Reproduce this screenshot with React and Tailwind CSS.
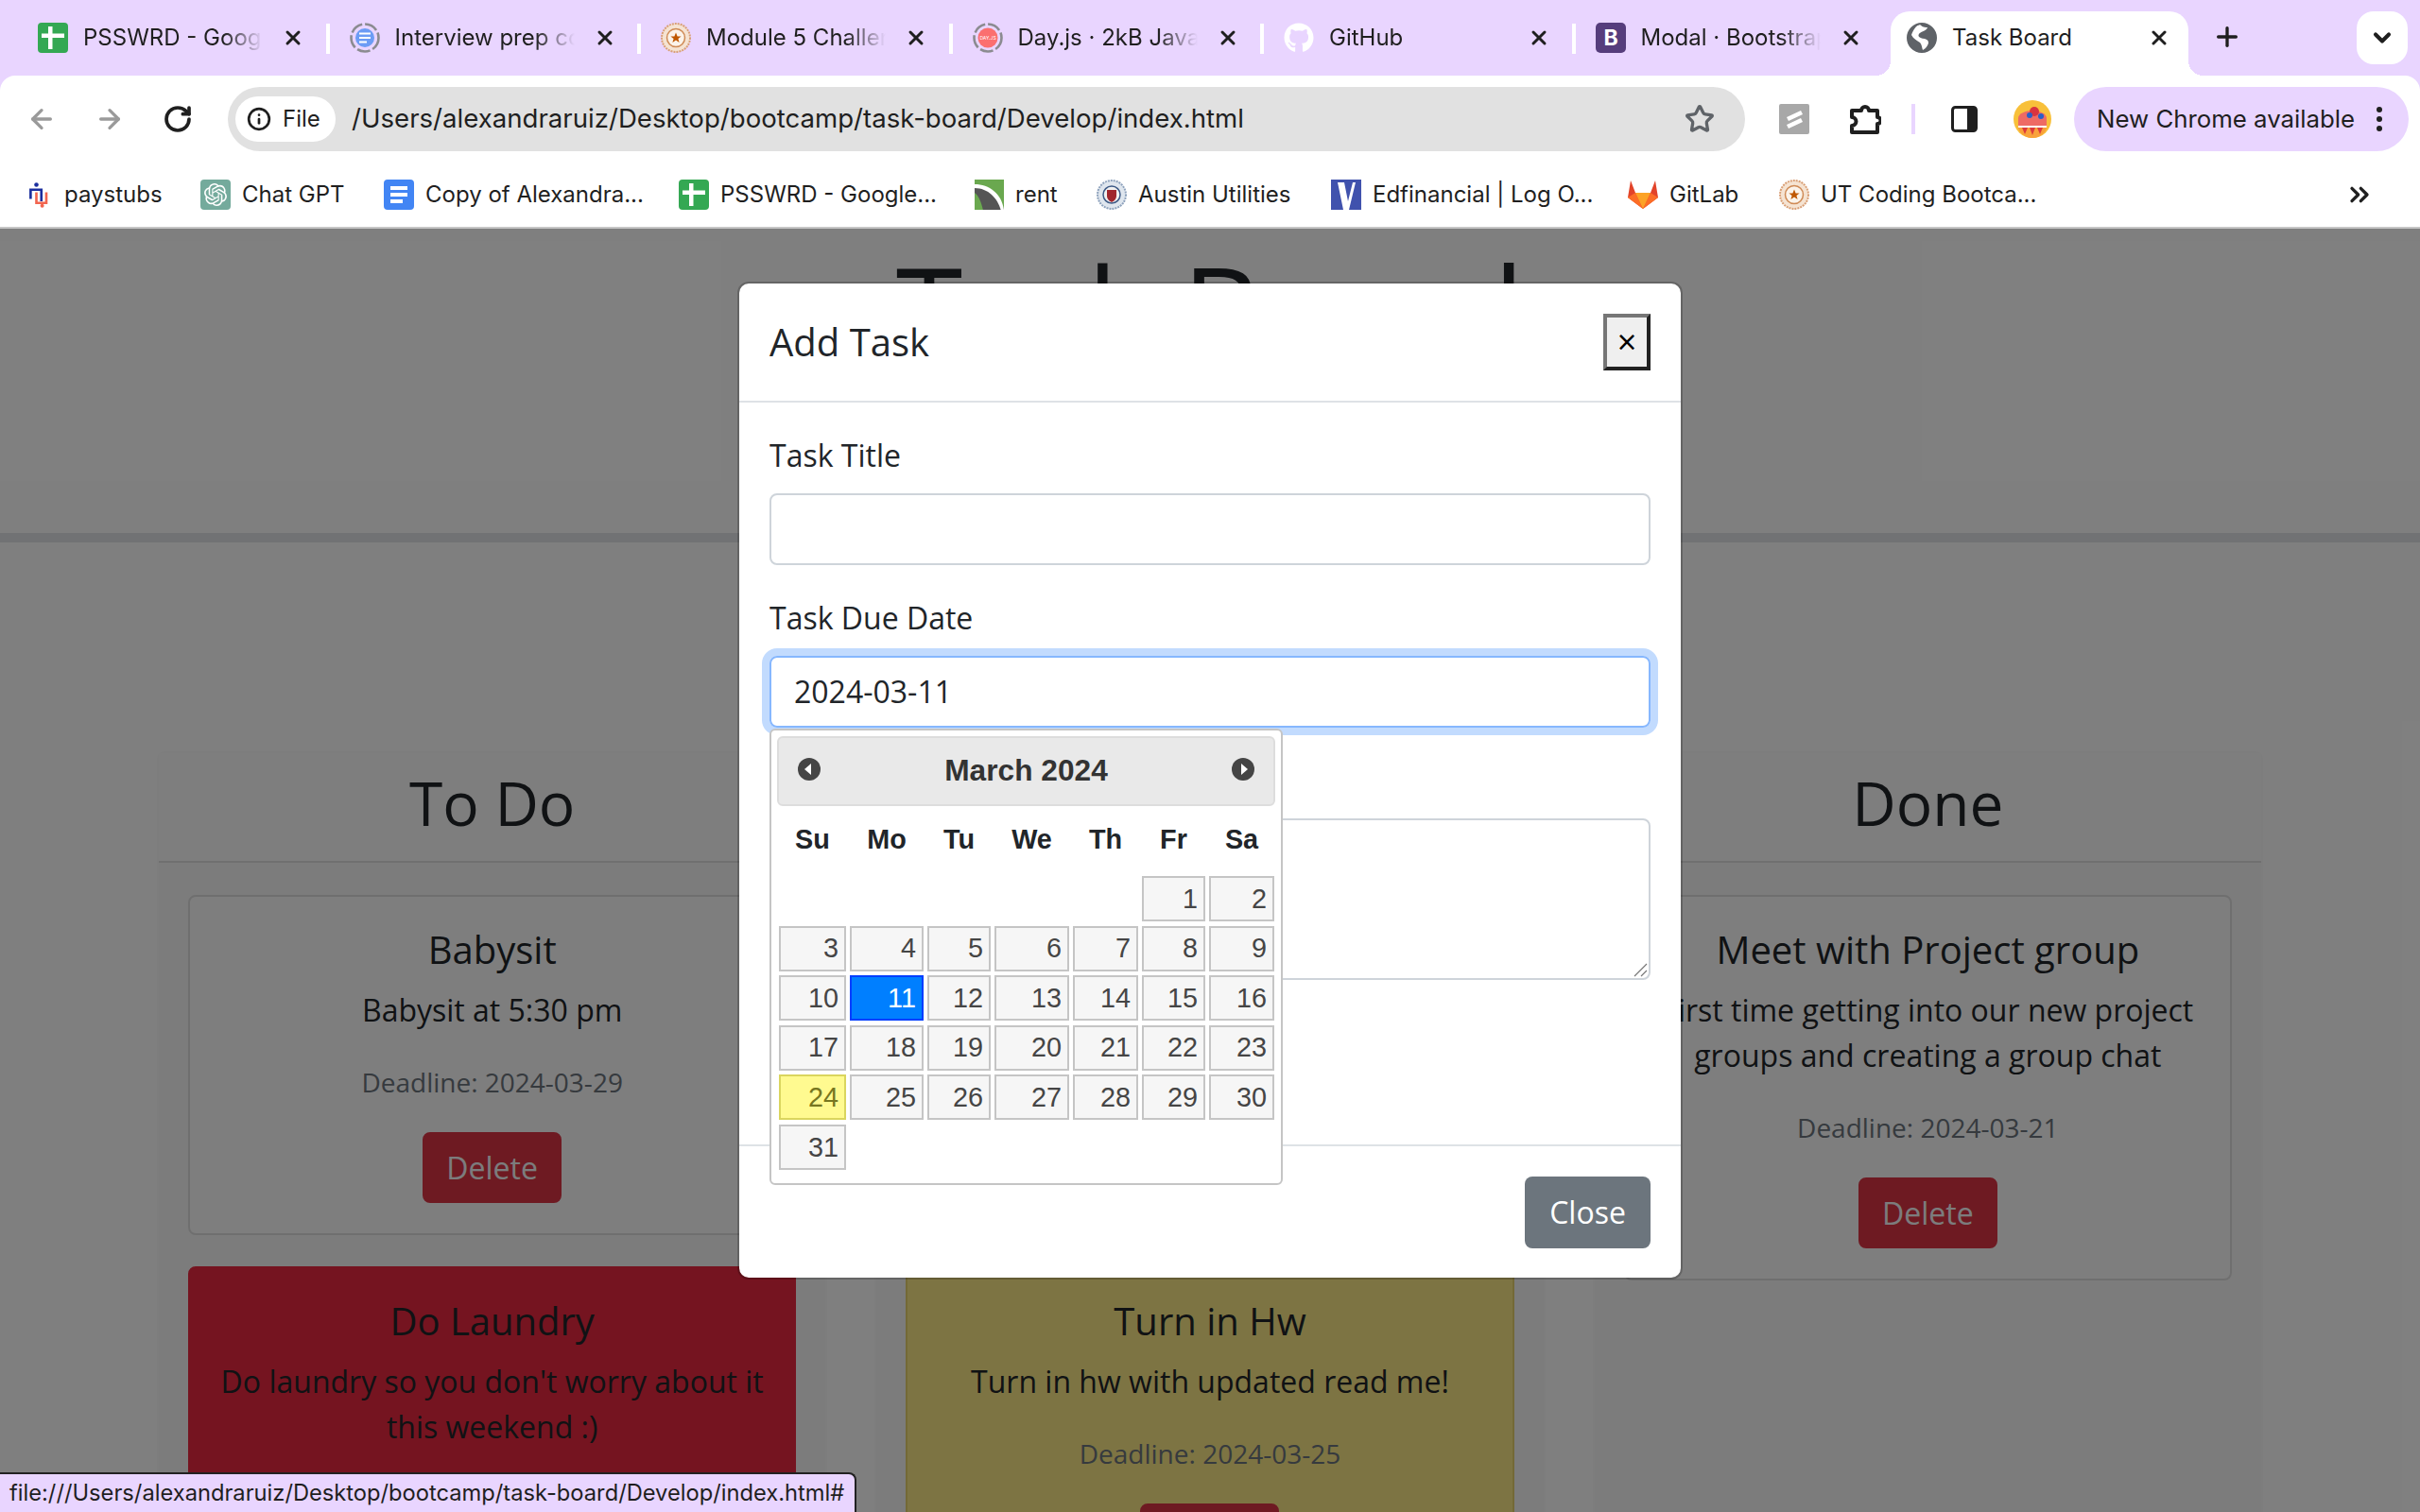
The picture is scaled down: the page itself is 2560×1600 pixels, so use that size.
import React from "react";
import { ArrowLeft, ArrowRight, RotateCw, X, Plus, ChevronDown, Star, Info, ChevronsRight } from "lucide-react";
import { FaGithub } from "react-icons/fa";
import { SiOpenai } from "react-icons/si";

const Sheets = () => (
  <svg viewBox="0 0 32 32" className="w-8 h-8 shrink-0">
    <rect width="32" height="32" rx="4" fill="#34a853" />
    <path d="M11 4h4.500v7.500H28V16H15.500v12H11V16H4v-4.500h7z" fill="#fff" />
  </svg>
);
const Docs = () => (
  <svg viewBox="0 0 32 32" className="w-8 h-8 shrink-0">
    <rect width="32" height="32" rx="4" fill="#4285f4" />
    <path d="M7 7h18v4H7zM7 14h18v4H7zM7 21h13v4H7z" fill="#fff" />
  </svg>
);
const Ring = ({ children }) => (
  <svg viewBox="0 0 32 32" className="w-8 h-8 shrink-0">
    <circle cx="16" cy="16" r="14.5" fill="none" stroke="#8b8b90" strokeWidth="2.6" strokeDasharray="14 3" />
    {children}
  </svg>
);
const Seal = () => (
  <svg viewBox="0 0 32 32" className="w-8 h-8 shrink-0">
    <circle cx="16" cy="16" r="15" fill="#f5e3d2" stroke="#d9a077" strokeWidth="2" strokeDasharray="2 1" />
    <circle cx="16" cy="16" r="9.5" fill="#fbf3ea" stroke="#cf8a55" strokeWidth="1.5" />
    <path d="M16 10.5l1.6 4h4l-3.2 2.5 1.2 4-3.600-2.400-3.600 2.400 1.200-4-3.200-2.500h4z" fill="#bf5700" />
  </svg>
);
const Globe = () => (
  <svg viewBox="0 0 32 32" className="w-8 h-8 shrink-0">
    <circle cx="16" cy="16" r="15" fill="#5f6368" />
    <path d="M14 2c3 3 6 3 8 3-1 4-7 4-9 7-2 3 2 5 6 5 4 1 5 4 3 7-1 2-3 4-5 5-1-3-1-6-3-8-3-2-7-4-9-8 2-6 5-10 9-11z" fill="#fff" />
    <circle cx="16" cy="16" r="15" fill="none" stroke="#5f6368" strokeWidth="2" />
  </svg>
);
const Boot = () => (
  <svg viewBox="0 0 32 32" className="w-8 h-8 shrink-0">
    <rect width="32" height="32" rx="5" fill="#563d7c" />
    <text x="16" y="24" textAnchor="middle" fontSize="23" fontWeight="700" fontFamily="Inter, sans-serif" fill="#fff">B</text>
  </svg>
);
const Paystubs = () => (
  <svg viewBox="0 0 32 32" className="w-7 h-8 shrink-0">
    <circle cx="12" cy="4" r="2.600" fill="#1c2f9e" />
    <path d="M5 21V10h13v14" fill="none" stroke="#1c2f9e" strokeWidth="3" />
    <path d="M12 13v13h12V13" fill="none" stroke="#f2654f" strokeWidth="3" />
    <circle cx="19" cy="29.500" r="2.300" fill="#f2654f" />
  </svg>
);
const Gpt = () => (
  <div className="w-8 h-8 shrink-0 rounded-[4px] bg-[#74aa9c] flex items-center justify-center">
    <SiOpenai className="w-6 h-6 text-white" />
  </div>
);
const Rent = () => (
  <svg viewBox="0 0 28 32" preserveAspectRatio="none" className="w-[31px] h-8 shrink-0">
    <rect width="28" height="32" fill="#6aa84f" />
    <path d="M0 8c14 0 24 8 28 24H8C6 22 3 16 0 14z" fill="#555" />
    <path d="M0 5c14 0 26 10 28 27h-3C22 20 13 9 0 9z" fill="#fff" />
  </svg>
);
const Austin = () => (
  <svg viewBox="0 0 32 32" className="w-8 h-8 shrink-0">
    <circle cx="16" cy="16" r="15" fill="#dfe6ee" stroke="#8fa3bd" strokeWidth="2" strokeDasharray="2 1" />
    <circle cx="16" cy="16" r="9" fill="#f1f1f1" stroke="#3d5a86" strokeWidth="1.500" />
    <path d="M11 11h10v6c0 4-3 6-5 7-2-1-5-3-5-7z" fill="#a0262d" />
  </svg>
);
const Edf = () => (
  <svg viewBox="0 0 32 32" className="w-8 h-8 shrink-0">
    <rect width="32" height="32" fill="#4052ad" />
    <path d="M7 3h7l4 20 5-20h3l-7 29h-6z" fill="#fff" />
  </svg>
);
const Gitlab = () => (
  <svg viewBox="0 0 32 32" className="w-8 h-8 shrink-0">
    <path d="M3 1l5 13h16l5-13 3 18-16 12L0 19z" fill="#e24329" />
    <path d="M0 19l8-5 8 17z" fill="#fc6d26" />
    <path d="M32 19l-8-5-8 17z" fill="#fc6d26" />
    <path d="M8 14h16l-8 17z" fill="#fca326" />
  </svg>
);
const Cake = () => (
  <svg viewBox="0 0 40 40" className="w-10 h-10 shrink-0">
    <circle cx="20" cy="20" r="20" fill="#f8c03a" />
    <path d="M5 19c0-5 8-8 15-8s15 3 15 8v11H5z" fill="#ee6a64" />
    <path d="M5 28h30c0 6-7 12-15 12S5 34 5 28z" fill="#f9a13a" />
    <path d="M5 27h30v2H5z" fill="#fff" />
    <path d="M9 29l3 7 3-7zM17 29l3 8 3-8zM25 29l3 7 3-7z" fill="#dd3b3b" />
    <circle cx="22" cy="12" r="5" fill="#d9333f" />
    <circle cx="17" cy="16" r="3" fill="#2b5fc7" />
    <circle cx="29" cy="17" r="3" fill="#2b5fc7" />
  </svg>
);

const tabs = [
  { icon: <Sheets />, title: "PSSWRD - Google Sheets" },
  { icon: <Ring><circle cx="16" cy="16" r="10" fill="#6c9cf5" /><path d="M10 11.500h12M10 16h12M10 20.500h8" stroke="#fff" strokeWidth="2" /></Ring>, title: "Interview prep coding" },
  { icon: <Seal />, title: "Module 5 Challenge" },
  { icon: <Ring><circle cx="16" cy="16" r="10.500" fill="#fb6f6f" /><text x="16" y="18" textAnchor="middle" fontSize="5" fill="#fff" fontFamily="Inter, sans-serif">DAY.JS</text></Ring>, title: "Day.js · 2kB JavaScript" },
  { icon: <span className="w-8 h-8 shrink-0 flex items-center justify-center"><FaGithub className="w-8 h-8 text-white" /></span>, title: "GitHub" },
  { icon: <Boot />, title: "Modal · Bootstrap v5" },
];

const bookmarks = [
  { icon: <Paystubs />, label: "paystubs", w: "w-[184px]" },
  { icon: <Gpt />, label: "Chat GPT", w: "w-[194px]" },
  { icon: <Docs />, label: "Copy of Alexandra...", w: "w-[312px]" },
  { icon: <Sheets />, label: "PSSWRD - Google...", w: "w-[313px]" },
  { icon: <Rent />, label: "rent", w: "w-[129px]" },
  { icon: <Austin />, label: "Austin Utilities", w: "w-[248px]" },
  { icon: <Edf />, label: "Edfinancial | Log O...", w: "w-[314px]" },
  { icon: <Gitlab />, label: "GitLab", w: "w-[160px]" },
  { icon: <Seal />, label: "UT Coding Bootca...", w: "w-[300px]" },
];

function Tab({ icon, title, last }) {
  return (
    <div className="w-[329.5px] h-[56px] flex items-center pl-[22px] relative shrink-0">
      {icon}
      <span className="ml-4 w-[190px] overflow-hidden whitespace-nowrap text-[24px] text-[#1f1f1f] [mask-image:linear-gradient(to_right,black_78%,transparent)]">{title}</span>
      <X className="ml-[20px] w-6 h-6 text-[#1f1f1f] shrink-0" strokeWidth={3} />
      {!last && <span className="absolute right-[-1px] top-[13px] w-1 h-8 bg-white" />}
    </div>
  );
}

function ChromeBar() {
  return (
    <div className="bg-[#e9d5ff] shrink-0 font-['Inter',sans-serif]">
      <div className="h-[80px] flex pl-[18px] pt-[12px] items-start">
        {tabs.map((t, i) => <Tab key={i} icon={t.icon} title={t.title} last={i === 5} />)}
        <div className="relative ml-[5px] w-[315px] h-[68px] bg-white rounded-t-[20px] flex items-center pl-[17px] pb-[12px] shrink-0">
          <span className="absolute left-[-16px] bottom-0 w-4 h-4 bg-[radial-gradient(circle_at_0_0,transparent_16px,white_16px)]" />
          <span className="absolute right-[-16px] bottom-0 w-4 h-4 bg-[radial-gradient(circle_at_100%_0,transparent_16px,white_16px)]" />
          <Globe />
          <span className="ml-4 text-[24px] text-[#1f1f1f] whitespace-nowrap">Task Board</span>
          <X className="ml-auto mr-[19px] w-6 h-6 text-[#1f1f1f]" strokeWidth={3} />
        </div>
        <Plus className="ml-[25px] mt-[11px] w-8 h-8 text-[#1f1f1f] shrink-0" strokeWidth={2.5} />
        <div className="ml-[121px] w-[54px] h-[56px] bg-white rounded-[18px] flex items-center justify-center shrink-0">
          <ChevronDown className="w-7 h-7 text-[#1f1f1f]" strokeWidth={3.5} />
        </div>
      </div>
      <div className="bg-white rounded-t-[16px] h-[80px] flex items-start pt-[12px] relative">
        <div className="w-[241px] h-[68px] flex items-center shrink-0">
          <ArrowLeft className="ml-[28px] w-8 h-8 text-[#9a9a9a]" strokeWidth={2.5} />
          <ArrowRight className="ml-[40px] w-8 h-8 text-[#9a9a9a]" strokeWidth={2.5} />
          <RotateCw className="ml-[40px] w-8 h-8 text-[#1f1f1f]" strokeWidth={2.75} />
        </div>
        <div className="w-[1605px] h-[68px] bg-[#e1e1e1] rounded-full flex items-center pl-2 shrink-0">
          <div className="h-[48px] w-[106px] bg-white rounded-full flex items-center pl-[12px] gap-[12px]">
            <Info className="w-[26px] h-[26px] text-[#1f1f1f]" strokeWidth={2.5} />
            <span className="text-[24px] text-[#1f1f1f]">File</span>
          </div>
          <span className="ml-[17px] text-[27.6px] text-[#1f1f1f] whitespace-nowrap">/Users/alexandraruiz/Desktop/bootcamp/task-board/Develop/index.html</span>
          <Star className="ml-auto mr-[32px] w-8 h-8 text-[#5f6368]" strokeWidth={2.5} />
        </div>
        <div className="ml-[36px] w-[32px] h-[68px] flex items-center shrink-0">
          <svg viewBox="0 0 32 32" className="w-8 h-8"><rect width="32" height="32" rx="2" fill="#a8a8a8" /><path d="M8 14l15-7 2 4-15 7zM8 22l15-7 2 4-15 7z" fill="#fff" /></svg>
        </div>
        <div className="ml-[42px] w-[34px] h-[68px] flex items-center shrink-0">
          <svg viewBox="0 0 34 36" className="w-[34px] h-9"><path d="M3 9h10a4 4 0 0 1 8 0h9v7a3.500 3.500 0 0 1 0 7v9H3v-7a4 4 0 0 0 0-9z" fill="none" stroke="#1f1f1f" strokeWidth="4" strokeLinejoin="round" /></svg>
        </div>
        <div className="ml-[32px] w-1 h-8 mt-[18px] bg-[#e9d5ff] shrink-0" />
        <div className="ml-[38px] w-[28px] h-[68px] flex items-center shrink-0">
          <svg viewBox="0 0 28 28" className="w-7 h-7"><rect x="1.500" y="1.500" width="25" height="25" rx="3" fill="#fff" stroke="#1f1f1f" strokeWidth="3" /><path d="M17 1.500h8a2 2 0 0 1 2 2v21a2 2 0 0 1-2 2h-8z" fill="#1f1f1f" /></svg>
        </div>
        <div className="ml-[38px] h-[68px] flex items-center shrink-0"><Cake /></div>
        <div className="ml-[24px] w-[354px] h-[68px] bg-[#e9d5ff] rounded-full flex items-center pl-[24px] shrink-0">
          <span className="text-[25.8px] text-[#1f1f1f] whitespace-nowrap">New Chrome available</span>
          <svg viewBox="0 0 6 28" className="ml-[23px] w-[6px] h-7"><circle cx="3" cy="4" r="3" fill="#1f1f1f" /><circle cx="3" cy="14" r="3" fill="#1f1f1f" /><circle cx="3" cy="24" r="3" fill="#1f1f1f" /></svg>
        </div>
      </div>
      <div className="bg-white h-[82px] flex items-center pl-[28px] pt-[12px] border-b-2 border-[#c6c6c6] relative">
        {bookmarks.map((b, i) => (
          <div key={i} className={`flex items-center shrink-0 ${b.w}`}>
            {b.icon}
            <span className="ml-3 text-[24px] text-[#1f1f1f] whitespace-nowrap">{b.label}</span>
          </div>
        ))}
        <ChevronsRight className="ml-auto mr-[48px] w-8 h-8 text-[#1f1f1f]" strokeWidth={2.5} />
      </div>
    </div>
  );
}

function TaskCard({ title, text, date, tone = "bg-[#fcfcfc] border-[#dfdfdf]" }) {
  return (
    <div className={`border-2 rounded-[8px] px-[30px] py-[32px] text-center ${tone}`}>
      <div className="text-[40px] leading-[48px] mb-4">{title}</div>
      <p className="text-[32px] leading-[48px] mb-[32px]">{text}</p>
      {date ? (
        <p className="text-[28px] leading-[41px] mb-[32px] text-[#6c757d]">Deadline: {date}</p>
      ) : (
        <div className="h-[148px]" />
      )}
      {date && <button className="h-[75px] w-[147px] bg-[#dc3545] border-2 border-[#dc3545] rounded-[8px] text-[32px] text-[#f8f9fa]">Delete</button>}
    </div>
  );
}

function Column({ title, children }) {
  return (
    <div className="flex-1 border-2 border-[#fbfbfb] rounded-[8px] bg-[#f8f8f8] min-w-0">
      <div className="h-[116px] border-b-2 border-[#e0e0e0] bg-[#fcfcfc] flex items-center justify-center text-[64px] pb-[8px]">{title}</div>
      <div className="pl-[31px] pr-[31px] pt-[34px] flex flex-col gap-[33px]">{children}</div>
    </div>
  );
}

function Board() {
  return (
    <div className="text-[#212529]">
      <div className="h-[322px] bg-white flex justify-center">
        <h1 className="text-[128px] leading-[1.2] pt-[8px]">Task Board</h1>
      </div>
      <div className="h-[10px] bg-[#e3e5e8]" />
      <div className="mt-[221px] px-[166px] flex gap-[50px]">
        <Column title="To Do">
          <TaskCard title="Babysit" text="Babysit at 5:30 pm" date="2024-03-29" />
          <TaskCard title="Do Laundry" text="Do laundry so you don't worry about it this weekend :)" tone="bg-[#ea2840] border-[#ea2840]" />
        </Column>
        <Column title="">
          <div className="h-[360px] bg-[#fcfcfc] border-2 border-[#dfdfdf] rounded-[8px]" />
          <TaskCard title="Turn in Hw" text="Turn in hw with updated read me!" date="2024-03-25" tone="bg-[#fbe887] border-[#e6d26d]" />
        </Column>
        <Column title="Done">
          <TaskCard title="Meet with Project group" text="First time getting into our new project groups and creating a group chat" date="2024-03-21" />
        </Column>
      </div>
    </div>
  );
}

const cols = "grid grid-cols-[71px_78px_67px_79px_69px_67px_69px] gap-x-[4px]";
const days = [
  null, null, null, null, null, 1, 2,
  3, 4, 5, 6, 7, 8, 9,
  10, 11, 12, 13, 14, 15, 16,
  17, 18, 19, 20, 21, 22, 23,
  24, 25, 26, 27, 28, 29, 30,
  31,
];

function DatePicker() {
  return (
    <div className="absolute left-[32px] top-[471px] w-[543px] h-[483px] bg-white border-2 border-[#c5c5c5] rounded-[6px] font-['Liberation_Sans',sans-serif] p-[6px]">
      <div className="h-[74px] bg-[#e9e9e9] border-2 border-[#dddddd] rounded-[6px] flex items-center justify-between px-[20px] text-[#333333]">
        <svg viewBox="0 0 24 24" className="w-6 h-6 mb-1"><circle cx="12" cy="12" r="12" fill="#454545" /><path d="M14 6v12l-7-6z" fill="#fff" /></svg>
        <span className="text-[31.68px] font-bold">March 2024</span>
        <svg viewBox="0 0 24 24" className="w-6 h-6 mb-1"><circle cx="12" cy="12" r="12" fill="#454545" /><path d="M10 6v12l7-6z" fill="#fff" /></svg>
      </div>
      <div className={`${cols} px-[2px] mt-[16px] h-[58px] text-[28.8px] font-bold text-[#212529] text-center leading-[38px]`}>
        {["Su", "Mo", "Tu", "We", "Th", "Fr", "Sa"].map((d) => <div key={d}>{d}</div>)}
      </div>
      <div className={`${cols} auto-rows-[48px] gap-y-[4.6px] px-[2px] text-[28.8px] leading-none`}>
        {days.map((d, i) => {
          if (d === null) return <div key={i} />;
          let tone = "bg-[#f6f6f6] border-[#c5c5c5] text-[#454545]";
          if (d === 11) tone = "bg-[#007fff] border-[#003eff] text-white";
          if (d === 24) tone = "bg-[#fffa90] border-[#dad55e] text-[#777620]";
          return <div key={i} className={`border-2 flex items-center justify-end pr-[6px] ${tone}`}>{d}</div>;
        })}
      </div>
    </div>
  );
}

function Modal() {
  return (
    <div className="absolute left-[780px] top-[56px] w-[1000px] h-[1056px] bg-white border-2 border-black/20 bg-clip-padding rounded-[12px] text-[#212529]">
      <div className="h-[126px] border-b-2 border-[#dee2e6] flex items-center justify-between px-[32px]">
        <span className="text-[40px] leading-[60px]">Add Task</span>
        <button className="w-[50px] h-[60px] bg-[#efefef] border-[4px] [border-style:outset] border-[#767676] text-[36px] leading-none text-black flex items-center justify-center">×</button>
      </div>
      <div className="h-[785px] px-[32px] pt-[32px]">
        <div className="text-[32px] leading-[48px] mb-4">Task Title</div>
        <div className="h-[76px] border-2 border-[#ced4da] rounded-[8px] mb-[32px]" />
        <div className="text-[32px] leading-[48px] mb-4">Task Due Date</div>
        <div className="h-[76px] border-2 border-[#86b7fe] rounded-[8px] shadow-[0_0_0_8px_#c2dbfe] mb-[96px] flex items-center pl-[24px] text-[32px]">2024-03-11</div>
        <div className="relative h-[171px] border-2 border-[#ced4da] rounded-[8px]">
          <svg viewBox="0 0 16 16" className="absolute right-[1px] bottom-[1px] w-4 h-4"><path d="M2 15L15 2M9 15l6-6" stroke="#777" strokeWidth="1.200" /></svg>
        </div>
      </div>
      <div className="h-[141px] border-t-2 border-[#dee2e6] flex justify-end pt-[32px] pr-[32px]">
        <button className="w-[133px] h-[76px] bg-[#6c757d] rounded-[8px] text-[32px] text-white">Close</button>
      </div>
      <DatePicker />
    </div>
  );
}

export default function App() {
  return (
    <div className="h-screen w-full overflow-hidden flex flex-col bg-white">
      <ChromeBar />
      <div className="relative flex-1 overflow-hidden font-['Open_Sans',sans-serif]">
        <Board />
        <div className="absolute inset-0 bg-black/50" />
        <Modal />
        <div className="absolute left-0 bottom-0 w-[906px] h-[42px] bg-[#e9d5ff] border-t-2 border-r-2 border-[#222] rounded-tr-[8px] font-['Inter',sans-serif] text-[23.7px] text-[#1f1f1f] pl-[10px] leading-[40px] whitespace-nowrap">file:///Users/alexandraruiz/Desktop/bootcamp/task-board/Develop/index.html#</div>
      </div>
    </div>
  );
}
